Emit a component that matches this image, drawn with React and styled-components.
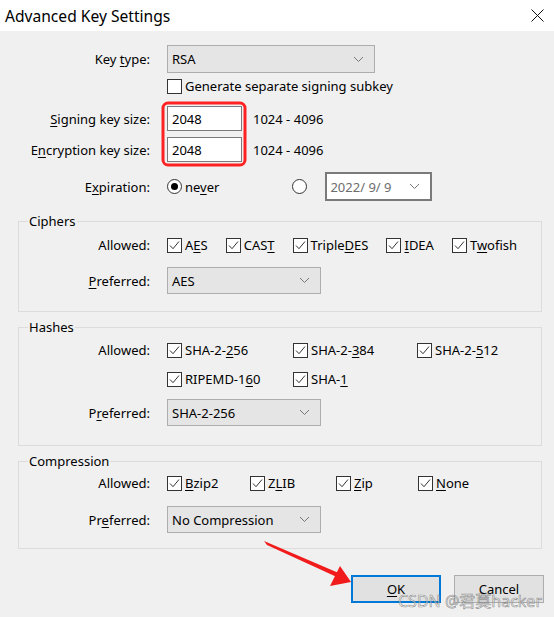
import styled, { createGlobalStyle } from 'styled-components'

const GlobalStyle = createGlobalStyle`
  html, body { margin: 0; padding: 0; background: #f0f0f0; }
  * { box-sizing: border-box; }
`

const Window = styled.div`
  position: relative;
  width: 554px;
  height: 617px;
  overflow: hidden;
  background: #f0f0f0;
  font-family: "Noto Sans", "Open Sans", sans-serif;
  font-size: 13px;
  color: #000;
`

const TitleBar = styled.div`
  height: 31px;
  background: #fff;
  display: flex;
  align-items: center;
  justify-content: space-between;
  padding: 0 10px 0 5px;
  font-size: 15.6px;
`

const Body = styled.div`
  padding: 0 12px 0 18px;
  display: flex;
  flex-direction: column;
`

const Row = styled.div`
  display: grid;
  grid-template-columns: ${(p) => p.$label || 132}px 1fr;
  column-gap: 17px;
  align-items: center;
  height: ${(p) => p.$h}px;
  margin-top: ${(p) => p.$mt || 0}px;
`

const Label = styled.div`
  text-align: right;
  white-space: nowrap;
`

const Controls = styled.div`
  display: flex;
  align-items: center;
  gap: ${(p) => p.$gap || 0}px;
`

const Select = styled.div`
  width: ${(p) => p.$w}px;
  height: ${(p) => p.$h || 27}px;
  background: #e5e5e5;
  border: 1px solid #adadad;
  display: flex;
  align-items: center;
  justify-content: space-between;
  padding: 0 10px 0 4px;
  color: ${(p) => (p.$disabled ? '#6d6d6d' : '#000')};
`

const DateBox = styled(Select)`
  background: #fff;
  border: 2px solid #7a7a7a;
  padding-left: 3px;
`

const TextInput = styled.div`
  width: 75px;
  height: 25px;
  background: #fff;
  border: 1px solid #7a7a7a;
  display: flex;
  align-items: center;
  padding-left: 4px;
`

const Range = styled.span`
  margin-left: 11px;
`

const Check = styled.label`
  display: inline-flex;
  align-items: center;
  gap: 3px;
  white-space: nowrap;
`

const Box = styled.span`
  width: 15px;
  height: 15px;
  background: #fff;
  border: 1px solid #333;
  display: inline-flex;
  align-items: center;
  justify-content: center;
  flex: none;
`

const Radio = styled.span`
  width: 15px;
  height: 15px;
  border-radius: 50%;
  background: #fff;
  border: 1px solid #333;
  display: inline-flex;
  align-items: center;
  justify-content: center;
  flex: none;
  &::after {
    content: '';
    width: 7px;
    height: 7px;
    border-radius: 50%;
    background: ${(p) => (p.$on ? '#000' : 'transparent')};
  }
`

const Group = styled.fieldset`
  margin: ${(p) => p.$mt}px 0 0 0;
  padding: 0;
  border: 1px solid #dcdcdc;
  height: ${(p) => p.$h}px;
  legend {
    margin-left: 9px;
    padding: 0 1px;
    line-height: 18px;
  }
`

const CheckGrid = styled.div`
  display: grid;
  grid-template-columns: ${(p) => p.$cols};
  align-items: center;
`

const Buttons = styled.div`
  display: flex;
  justify-content: flex-end;
  gap: 13px;
  margin: 26px -2px 0 0;
`

const Button = styled.button`
  width: ${(p) => (p.$primary ? 90 : 90)}px;
  height: 28px;
  background: #e1e1e1;
  border: ${(p) => (p.$primary ? '2px solid #0078d7' : '1px solid #adadad')};
  font: inherit;
  font-size: 13px;
  padding: 0;
`

const Overlay = styled.svg`
  position: absolute;
  left: 0;
  top: 0;
  pointer-events: none;
`

const Watermark = styled.div`
  position: absolute;
  left: 398px;
  top: 588px;
  font-family: "Noto Sans", "Noto Sans CJK SC", sans-serif;
  font-size: 16px;
  color: rgba(255, 255, 255, 0.5);
  -webkit-text-stroke: 0.6px rgba(70, 70, 70, 0.6);
  white-space: nowrap;
`

const Chevron = () => (
  <svg width="11" height="7" viewBox="0 0 11 7">
    <path d="M1 1l4.5 4.5L10 1" fill="none" stroke="#777" strokeWidth="1" />
  </svg>
)

const CheckBox = ({ checked, children }) => (
  <Check>
    <Box>
      {checked && (
        <svg width="13" height="13" viewBox="0 0 13 13">
          <path d="M2 6.5l3 3.2L11 2.5" fill="none" stroke="#333" strokeWidth="1" />
        </svg>
      )}
    </Box>
    <span>{children}</span>
  </Check>
)

const U = styled.u`
  text-decoration-thickness: 1px;
  text-underline-offset: 2px;
`

const App = () => {
  return (
    <Window>
      <GlobalStyle />
      <TitleBar>
        <span>Advanced Key Settings</span>
        <svg width="13" height="13" viewBox="0 0 13 13">
          <path d="M0.5 0.5l12 12M12.5 0.5l-12 12" stroke="#111" strokeWidth="1" />
        </svg>
      </TitleBar>
      <Body>
        <Row $h={28} $mt={14}>
          <Label>Key <U>t</U>ype:</Label>
          <Controls>
            <Select $w={208} $h={28}>RSA<Chevron /></Select>
          </Controls>
        </Row>
        <Row $h={26}>
          <span />
          <Controls>
            <CheckBox>Generate separate signing subkey</CheckBox>
          </Controls>
        </Row>
        <Row $h={25} $mt={7}>
          <Label><U>S</U>igning key size:</Label>
          <Controls>
            <TextInput>2048</TextInput>
            <Range>1024 - 4096</Range>
          </Controls>
        </Row>
        <Row $h={25} $mt={6}>
          <Label>E<U>n</U>cryption key size:</Label>
          <Controls>
            <TextInput>2048</TextInput>
            <Range>1024 - 4096</Range>
          </Controls>
        </Row>
        <Row $h={28} $mt={10}>
          <Label>E<U>x</U>piration:</Label>
          <Controls>
            <Check>
              <Radio $on />
              <span>ne<U>v</U>er</span>
            </Check>
            <Radio style={{ marginLeft: 73 }} />
            <DateBox $w={107} $h={29} $disabled style={{ marginLeft: 18 }}>
              2022/ 9/ 9<Chevron />
            </DateBox>
          </Controls>
        </Row>

        <Group $mt={12} $h={100}>
          <legend>Ciphers</legend>
          <Row $label={131} $h={28} $mt={1}>
            <Label>Allowed:</Label>
            <Controls $gap={18}>
              <CheckBox checked>A<U>E</U>S</CheckBox>
              <CheckBox checked>CAS<U>T</U></CheckBox>
              <CheckBox checked>Triple<U>D</U>ES</CheckBox>
              <CheckBox checked><U>I</U>DEA</CheckBox>
              <CheckBox checked>T<U>w</U>ofish</CheckBox>
            </Controls>
          </Row>
          <Row $label={131} $h={27} $mt={8}>
            <Label><U>P</U>referred:</Label>
            <Controls>
              <Select $w={154}>AES<Chevron /></Select>
            </Controls>
          </Row>
        </Group>

        <Group $mt={6} $h={128}>
          <legend>Hashes</legend>
          <Row $label={131} $h={28} $mt={0}>
            <Label>Allowed:</Label>
            <CheckGrid $cols="126px 124px auto">
              <CheckBox checked>SHA-2-<U>2</U>56</CheckBox>
              <CheckBox checked>SHA-2-<U>3</U>84</CheckBox>
              <CheckBox checked>SHA-2-<U>5</U>12</CheckBox>
            </CheckGrid>
          </Row>
          <Row $label={131} $h={28} $mt={1}>
            <span />
            <CheckGrid $cols="126px 124px auto">
              <CheckBox checked>RIPEMD-1<U>6</U>0</CheckBox>
              <CheckBox checked>SHA-<U>1</U></CheckBox>
            </CheckGrid>
          </Row>
          <Row $label={131} $h={27} $mt={6}>
            <Label>P<U>r</U>eferred:</Label>
            <Controls>
              <Select $w={154}>SHA-2-256<Chevron /></Select>
            </Controls>
          </Row>
        </Group>

        <Group $mt={6} $h={97}>
          <legend>Compression</legend>
          <Row $label={131} $h={28} $mt={-1}>
            <Label>Allowed:</Label>
            <CheckGrid $cols="83px 86px 82px auto">
              <CheckBox checked><U>B</U>zip2</CheckBox>
              <CheckBox checked>Z<U>L</U>IB</CheckBox>
              <CheckBox checked><U>Z</U>ip</CheckBox>
              <CheckBox checked><U>N</U>one</CheckBox>
            </CheckGrid>
          </Row>
          <Row $label={131} $h={27} $mt={9}>
            <Label>Pr<U>e</U>ferred:</Label>
            <Controls>
              <Select $w={154}>No Compression<Chevron /></Select>
            </Controls>
          </Row>
        </Group>

        <Buttons>
          <Button $primary><U>O</U>K</Button>
          <Button>Cancel</Button>
        </Buttons>
      </Body>

      <Overlay width="554" height="617" viewBox="0 0 554 617">
        <rect x="163" y="103" width="82" height="62" rx="5" fill="none" stroke="#f22" strokeWidth="3" />
        <polygon points="264,541 267,545 339,578 341,574" fill="#f21b1b" />
        <polygon points="351,582 330,586 340,566" fill="#f21b1b" />
      </Overlay>
      <Watermark>CSDN @君莫hacker</Watermark>
    </Window>
  )
}

export default App
